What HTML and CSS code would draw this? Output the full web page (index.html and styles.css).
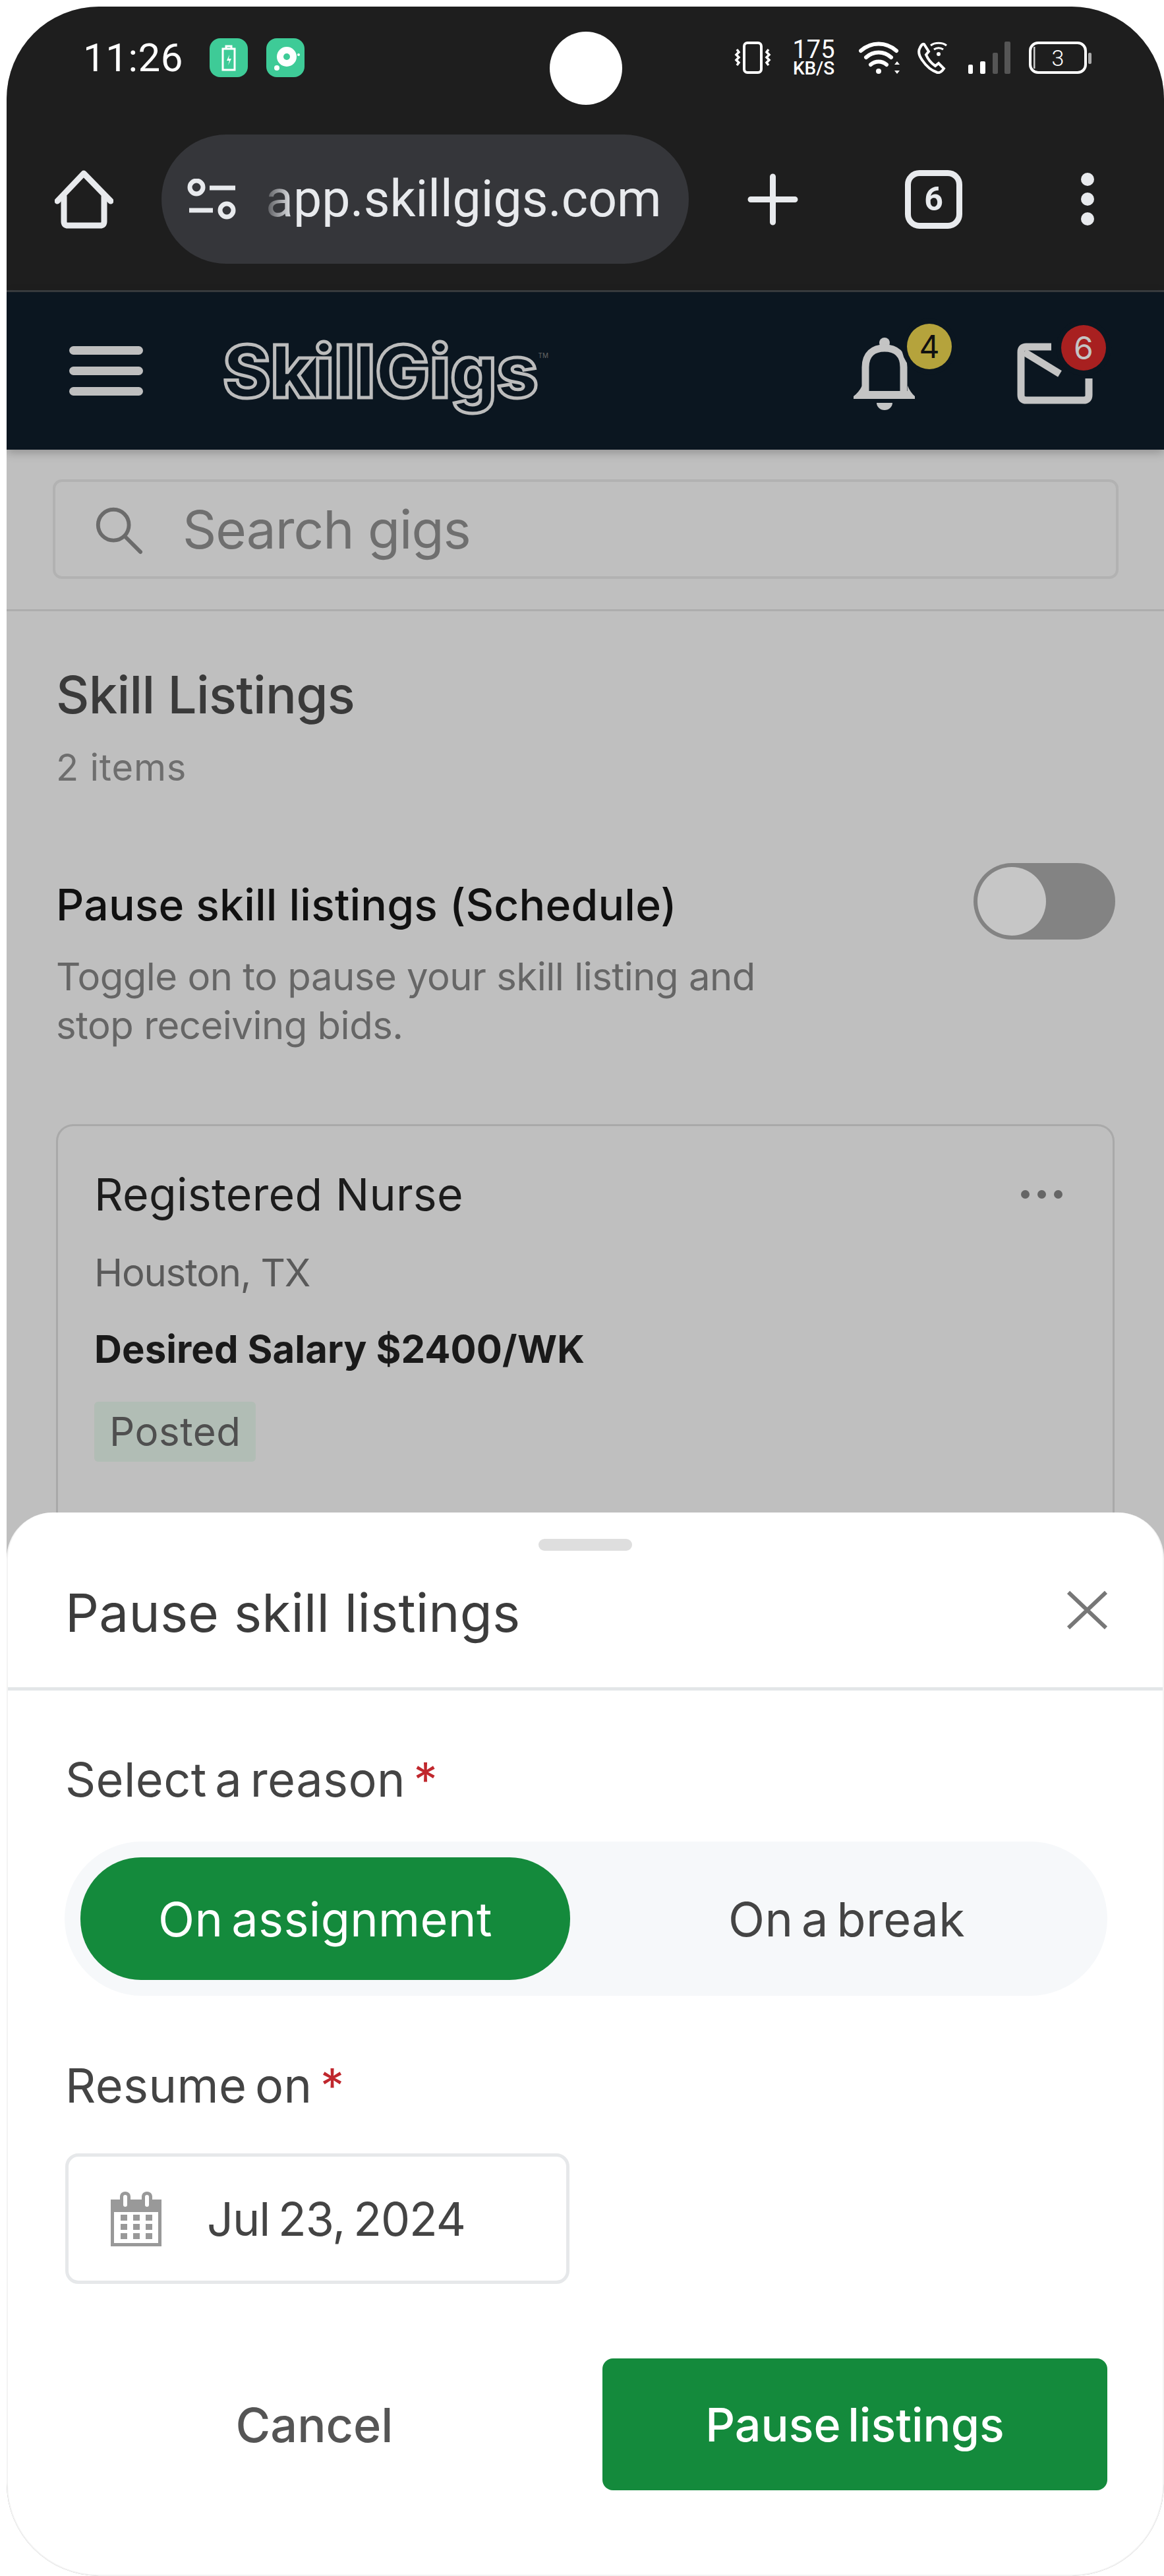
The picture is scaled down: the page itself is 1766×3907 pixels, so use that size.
FILE: index.html
```html
<!DOCTYPE html>
<html lang="en">
<head>
    <meta charset="UTF-8">
    <meta name="viewport" content="width=device-width, initial-scale=1.0">
    <title>SkillGigs - Pause skill listings</title>
    <link rel="stylesheet" href="styles.css">
</head>
<body>
<div class="phone">
    <div class="camera"></div>

    <!-- Status bar -->
    <div class="status">
        <div class="status-left">
            <span class="time">11:26</span>
            <span class="app-icon">
                <svg width="34" height="44" viewBox="0 0 34 44" fill="none" stroke="#fff" stroke-width="3">
                    <rect x="8" y="8" width="18" height="32"/>
                    <path d="M13 8V4h8v4"/>
                    <path d="M18 17l-4 9h4l-2 7 5-10h-4z" fill="#fff" stroke="none"/>
                </svg>
            </span>
            <span class="app-icon">
                <svg width="48" height="48" viewBox="0 0 48 48">
                    <circle cx="26" cy="22" r="15" fill="#fff"/>
                    <circle cx="26" cy="22" r="5" fill="#3ecb97"/>
                    <circle cx="11" cy="39" r="4" fill="#fff"/>
                    <circle cx="44" cy="19" r="2" fill="#fff"/>
                </svg>
            </span>
        </div>
        <div class="status-right">
            <svg width="56" height="49" viewBox="0 0 56 49" fill="none" stroke="#fff">
                <rect x="15" y="2" width="26" height="45" rx="5" stroke-width="4"/>
                <path d="M4 12l3 4-4 4 4 4-4 4 4 4-3 4M52 12l-3 4 4 4-4 4 4 4-4 4 3 4" stroke-width="3.5"/>
            </svg>
            <div class="net"><span class="net-val">175</span><span class="net-unit">KB/S</span></div>
            <svg class="wifi" width="66" height="49" viewBox="0 0 66 49" fill="none" stroke="#fff" stroke-width="6" stroke-linecap="round">
                <path d="M3 14C19 0 41 0 57 14"/>
                <path d="M11 24C22 14 38 14 49 24"/>
                <path d="M18 35C25 29 35 29 42 35"/>
                <circle cx="30" cy="45" r="4" fill="#fff" stroke="none"/>
                <path d="M58 30l-4 5h8zM58 49l-4-5h8z" fill="#fff" stroke="none"/>
            </svg>
            <svg width="49" height="49" viewBox="0 0 49 49" fill="none" stroke="#fff" stroke-width="4">
                <path d="M4 9C1 14 2 21 7 28C13 37 21 44 30 47C34 48 38 44 40 41L32 33L27 37C21 33 16 27 13 20L17 15L10 4C8 3 6 5 4 9Z"/>
                <path d="M20 6C26 1 38 1 44 6M25 12C29 9 35 9 39 12" stroke-width="3"/>
                <circle cx="32" cy="19" r="3" fill="#fff" stroke="none"/>
            </svg>
            <svg width="64" height="49" viewBox="0 0 64 49">
                <rect x="0" y="35" width="7" height="14" rx="2" fill="#fff"/>
                <rect x="18" y="30" width="8" height="19" rx="2" fill="#fff"/>
                <rect x="37" y="17" width="8" height="32" rx="2" fill="#555"/>
                <rect x="55" y="0" width="9" height="49" rx="2" fill="#555"/>
            </svg>
            <svg width="95" height="49" viewBox="0 0 95 49" fill="none">
                <rect x="2" y="2" width="84" height="45" rx="12" stroke="#fff" stroke-width="4"/>
                <rect x="7" y="8" width="2.5" height="33" fill="#ccc"/>
                <rect x="90" y="17" width="5" height="17" rx="2" fill="#aaa"/>
                <text class="batt-num" x="44" y="37" text-anchor="middle">3</text>
            </svg>
        </div>
    </div>

    <!-- Browser toolbar -->
    <div class="browser">
        <svg class="home" width="89" height="89" viewBox="0 0 89 89" fill="none" stroke="#e8eaed" stroke-width="9" stroke-linejoin="round" stroke-linecap="round">
            <path d="M4 47L44 5L85 47"/>
            <path d="M14 40V78Q14 84 20 84H69Q75 84 75 78V40"/>
        </svg>
        <div class="url-pill">
            <svg width="75" height="62" viewBox="0 0 75 62" fill="none" stroke="#e8eaed" stroke-width="7">
                <circle cx="14" cy="13" r="10"/>
                <path d="M34 14H73M3 48H39"/>
                <circle cx="60" cy="48" r="10"/>
            </svg>
            <span class="url"><span class="url-fade">a</span>pp.skillgigs.com</span>
        </div>
        <svg class="plus" width="77" height="79" viewBox="0 0 77 79" stroke="#e8eaed" stroke-width="9" stroke-linecap="round">
            <path d="M38.5 5V74M5 39.5H72"/>
        </svg>
        <div class="tabs">6</div>
        <div class="dots"><i></i><i></i><i></i></div>
    </div>

    <!-- App header -->
    <header class="topbar">
        <div class="burger"><i></i><i></i><i></i></div>
        <div class="logo">SkillGigs<span class="logo-tm">TM</span></div>
        <div class="top-icons">
            <div class="top-icon">
                <svg width="93" height="111" viewBox="0 0 93 111" fill="#c4c4c4">
                    <circle cx="47" cy="9" r="8"/>
                    <path d="M18 88V46C18 26 30 17 47 17C64 17 76 26 76 46V88" fill="none" stroke="#c4c4c4" stroke-width="11"/>
                    <path d="M0 90Q8 84 13 74V82H82V74Q86 84 93 90V94H0Z"/>
                    <path d="M35 100H59A12 11 0 0 1 35 100Z"/>
                </svg>
                <span class="badge badge-yellow">4</span>
            </div>
            <div class="top-icon">
                <svg width="115" height="93" viewBox="0 0 115 93" fill="none" stroke="#c4c4c4" stroke-width="11">
                    <path d="M52 6H14Q6 6 6 14V79Q6 87 14 87H101Q109 87 109 79V54"/>
                    <path d="M11 14L65 47"/>
                </svg>
                <span class="badge badge-red">6</span>
            </div>
        </div>
    </header>

    <main class="page">
        <div class="search-wrap">
            <div class="search">
                <svg width="76" height="78" viewBox="0 0 78 78" fill="none" stroke="#6b6b6b" stroke-width="6" stroke-linecap="round">
                    <circle cx="32" cy="32" r="24"/>
                    <path d="M50 50L74 74"/>
                </svg>
                <span class="search-text">Search gigs</span>
            </div>
        </div>

        <section class="listings">
            <h1 class="page-title">Skill Listings</h1>
            <p class="count">2 items</p>

            <div class="pause-row">
                <div class="pause-copy">
                    <h2 class="pause-title">Pause skill listings (Schedule)</h2>
                    <p class="pause-desc">Toggle on to pause your skill listing and<br>stop receiving bids.</p>
                </div>
                <div class="toggle"><i></i></div>
            </div>

            <div class="card">
                <div class="card-head">
                    <h3 class="card-title">Registered Nurse</h3>
                    <div class="more"><i></i><i></i><i></i></div>
                </div>
                <p class="card-loc">Houston, TX</p>
                <p class="card-salary">Desired Salary $2400/WK</p>
                <span class="chip">Posted</span>
            </div>
        </section>
    </main>

    <!-- Bottom sheet -->
    <div class="sheet">
        <div class="handle"></div>
        <div class="sheet-head">
            <h2 class="sheet-title">Pause skill listings</h2>
            <svg class="sheet-close" width="63" height="58" viewBox="0 0 63 58" stroke="#777" stroke-width="6">
                <path d="M3 2L60 56M60 2L3 56"/>
            </svg>
        </div>
        <div class="sheet-body">
            <label class="field-label">Select a reason <span class="req">*</span></label>
            <div class="segment">
                <div class="seg-item seg-active">On assignment</div>
                <div class="seg-item">On a break</div>
            </div>

            <label class="field-label resume-label">Resume on <span class="req">*</span></label>
            <div class="date-input">
                <svg width="77" height="83" viewBox="0 0 77 83" fill="#999">
                    <path d="M0 12H14V7A8 7 0 0 1 30 7V12H47V7A8 7 0 0 1 63 7V12H77V83H0ZM5 31V78H72V31Z" fill-rule="evenodd"/>
                    <rect x="19" y="5" width="6" height="18" rx="3" fill="#fff"/>
                    <rect x="52" y="5" width="6" height="18" rx="3" fill="#fff"/>
                    <rect x="15" y="35" width="10" height="9"/><rect x="34" y="35" width="10" height="9"/><rect x="53" y="35" width="10" height="9"/>
                    <rect x="15" y="49" width="10" height="9"/><rect x="34" y="49" width="10" height="9"/><rect x="53" y="49" width="10" height="9"/>
                    <rect x="15" y="63" width="10" height="9"/><rect x="34" y="63" width="10" height="9"/><rect x="53" y="63" width="10" height="9"/>
                </svg>
                <span class="date-text">Jul 23, 2024</span>
            </div>

            <div class="actions">
                <div class="btn-cancel">Cancel</div>
                <div class="btn-primary">Pause listings</div>
            </div>
        </div>
    </div>
</div>
</body>
</html>
```

FILE: styles.css
```css
/* General */
* {
    box-sizing: border-box;
}
body {
    margin: 0;
    background: #fff;
    font-family: Inter, "Noto Sans", sans-serif;
}
h1, h2, h3, p {
    margin: 0;
    font-weight: 400;
}
.phone {
    position: relative;
    width: 1756px;
    height: 3897px;
    margin: 10px 0 0 10px;
    border-radius: 140px;
    overflow: hidden;
    background: #bfbfbf;
}
.camera {
    position: absolute;
    left: 824px;
    top: 38px;
    width: 110px;
    height: 111px;
    border-radius: 50%;
    background: #fff;
}

/* Status bar */
.status {
    height: 194px;
    padding: 48px 110px 0 116px;
    display: flex;
    justify-content: space-between;
    align-items: flex-start;
    background: #1e1e1e;
}
.status-left {
    display: flex;
    align-items: center;
    height: 59px;
}
.time {
    width: 192px;
    font-family: Roboto, sans-serif;
    font-size: 60px;
    letter-spacing: 0.5px;
    color: #fff;
}
.app-icon {
    width: 58px;
    height: 59px;
    margin-right: 28px;
    border-radius: 16px;
    background: #3ecb97;
    display: flex;
    align-items: center;
    justify-content: center;
}
.status-right {
    display: flex;
    align-items: center;
    gap: 28px;
    height: 59px;
}
.net {
    display: flex;
    flex-direction: column;
    align-items: center;
    width: 65px;
    margin: 0 8px 0 4px;
    font-family: Roboto, sans-serif;
    color: #fff;
}
.net-val {
    font-size: 38px;
    line-height: 32px;
}
.net-unit {
    font-size: 28px;
    font-weight: 500;
    line-height: 26px;
}
.wifi {
    margin-right: -5px;
}
.batt-num {
    font-family: Roboto, sans-serif;
    font-size: 34px;
    font-weight: 300;
    fill: #fff;
}

/* Browser toolbar */
.browser {
    height: 239px;
    padding: 0 0 40px 73px;
    display: flex;
    align-items: center;
    background: #1e1e1e;
    border-bottom: 3px solid #3b3e41;
}
.url-pill {
    width: 800px;
    height: 196px;
    margin-left: 73px;
    padding-left: 39px;
    border-radius: 98px;
    background: #35363a;
    display: flex;
    align-items: center;
    gap: 44px;
}
.url {
    font-family: Roboto, sans-serif;
    font-size: 77px;
    color: #e8eaed;
}
.url-fade {
    background: linear-gradient(90deg, #55565a, #e8eaed);
    -webkit-background-clip: text;
    background-clip: text;
    color: transparent;
}
.plus {
    margin-left: 89px;
}
.tabs {
    width: 87px;
    height: 89px;
    margin-left: 162px;
    border: 9px solid #e8eaed;
    border-radius: 22px;
    display: flex;
    align-items: center;
    justify-content: center;
    font-family: Roboto, sans-serif;
    font-size: 50px;
    font-weight: 700;
    color: #e8eaed;
}
.dots {
    margin-left: 180px;
    display: flex;
    flex-direction: column;
    gap: 10px;
}
.dots i {
    width: 20px;
    height: 20px;
    border-radius: 50%;
    background: #e8eaed;
}

/* App header */
.topbar {
    position: relative;
    height: 239px;
    padding: 0 108px 0 95px;
    display: flex;
    align-items: center;
    background: #0b1620;
    box-shadow: 0 4px 14px rgba(0, 0, 0, 0.25);
}
.burger {
    display: flex;
    flex-direction: column;
    gap: 18px;
}
.burger i {
    width: 112px;
    height: 13px;
    border-radius: 7px;
    background: #bfbfbf;
}
.logo {
    position: relative;
    margin-left: 121px;
    font-size: 110px;
    font-weight: 800;
    line-height: 120px;
    letter-spacing: 0;
    color: #0b1620;
    -webkit-text-stroke: 5px #bcbcbc;
}
.logo-tm {
    position: absolute;
    left: 100%;
    top: 30px;
    font-size: 10px;
    font-weight: 400;
    line-height: 12px;
    letter-spacing: 0;
    color: #666;
    -webkit-text-stroke: 0;
}
.top-icons {
    margin-left: auto;
    margin-top: 8px;
    display: flex;
    align-items: center;
    gap: 155px;
}
.top-icon {
    position: relative;
    display: flex;
}
.badge {
    position: absolute;
    width: 68px;
    height: 69px;
    border-radius: 50%;
    box-shadow: 0 0 0 8px #0b1620;
    display: flex;
    align-items: center;
    justify-content: center;
    font-size: 48px;
}
.top-icon:first-child .badge {
    left: 81px;
    top: -20px;
}
.top-icon:last-child .badge {
    left: 67px;
    top: -27px;
}
.badge-yellow {
    background: #b5a33c;
    color: #111;
}
.badge-red {
    background: #a82020;
    color: #c4c4c4;
}

/* Page behind the sheet */
.page {
    color: #3a3a3a;
}
.search-wrap {
    padding: 45px 69px 46px 70px;
    border-bottom: 3px solid #adadad;
}
.search {
    height: 151px;
    padding-left: 57px;
    border: 4px solid #b2b2b2;
    border-radius: 14px;
    display: flex;
    align-items: center;
    gap: 60px;
}
.search-text {
    font-size: 80px;
    letter-spacing: -1px;
    color: #6f6f6f;
}
.listings {
    padding: 0 74px 0 75px;
}
.page-title {
    margin-top: 77px;
    font-size: 78px;
    line-height: 100px;
    font-weight: 500;
    letter-spacing: -0.7px;
    color: #3a3a3a;
}
.count {
    margin-top: 25px;
    font-size: 56px;
    line-height: 70px;
    letter-spacing: 0.8px;
    color: #6e6e6e;
}
.pause-row {
    margin-top: 100px;
    display: flex;
    justify-content: space-between;
    align-items: flex-start;
}
.pause-title {
    margin-top: 33px;
    font-size: 66px;
    line-height: 80px;
    font-weight: 500;
    letter-spacing: 0.2px;
    color: #111;
}
.pause-desc {
    margin-top: 32px;
    font-size: 58px;
    line-height: 74px;
    letter-spacing: -0.5px;
    color: #666;
}
.toggle {
    width: 215px;
    height: 116px;
    margin-top: 10px;
    padding: 6px;
    border-radius: 58px;
    background: #838383;
}
.toggle i {
    display: block;
    width: 104px;
    height: 104px;
    border-radius: 50%;
    background: #c6c6c6;
}
.card {
    height: 700px;
    margin: 113px 1px 0 0;
    padding: 0 76px 0 55px;
    border: 3px solid #a9a9a9;
    border-radius: 26px;
}
.card-head {
    margin-top: 63px;
    display: flex;
    justify-content: space-between;
    align-items: center;
}
.card-title {
    font-size: 68px;
    line-height: 80px;
    letter-spacing: 0.3px;
    color: #1c1c1c;
}
.more {
    display: flex;
    gap: 12px;
}
.more i {
    width: 13px;
    height: 13px;
    border-radius: 50%;
    background: #666;
}
.card-loc {
    margin-top: 44px;
    font-size: 58px;
    line-height: 70px;
    letter-spacing: -1.2px;
    color: #5a5a5a;
}
.card-salary {
    margin-top: 46px;
    font-size: 58px;
    line-height: 70px;
    font-weight: 700;
    letter-spacing: 0.1px;
    color: #1a1a1a;
}
.chip {
    display: inline-block;
    height: 91px;
    margin-top: 45px;
    padding: 0 23px;
    border-radius: 6px;
    background: #b1bdb5;
    font-size: 60px;
    line-height: 91px;
    letter-spacing: 0.5px;
    color: #4f4f4f;
}

/* Bottom sheet */
.sheet {
    position: absolute;
    left: 0;
    right: 0;
    bottom: 0;
    height: 1613px;
    padding-top: 40px;
    background: #fff;
    border: 2px solid #f3f3f3;
    border-top: 0;
    border-radius: 70px 70px 140px 140px;
}
.handle {
    width: 142px;
    height: 18px;
    margin: 0 auto;
    border-radius: 9px;
    background: #dedede;
}
.sheet-head {
    height: 212px;
    padding: 0 83px 20px 87px;
    display: flex;
    justify-content: space-between;
    align-items: center;
    border-bottom: 5px solid #e3e6e8;
}
.sheet-title {
    font-size: 80px;
    font-weight: 400;
    letter-spacing: 0.2px;
    color: #3c3c3c;
}
.sheet-close {
    margin-top: -8px;
}
.sheet-body {
    padding: 90px 84px 0 87px;
    font-size: 72px;
    letter-spacing: 0.4px;
    word-spacing: -8px;
    color: #444;
}
.field-label {
    display: block;
    line-height: 90px;
}
.req {
    color: #c0272d;
}
.resume-label {
    margin-top: 91px;
}
.segment {
    height: 234px;
    margin: 49px 0 0 -1px;
    padding: 24px;
    border-radius: 117px;
    background: #f6f8fa;
    display: flex;
}
.seg-item {
    flex: 1;
    padding-left: 48px;
    display: flex;
    align-items: center;
    justify-content: center;
}
.seg-active {
    flex: 0 0 743px;
    padding-left: 0;
    border-radius: 92px;
    background: #148a3c;
    color: #fff;
}
.date-input {
    width: 765px;
    height: 198px;
    margin: 58px 0 0 0;
    padding-left: 64px;
    border: 5px solid #e6e8ea;
    border-radius: 20px;
    display: flex;
    align-items: center;
    gap: 69px;
}
.date-text {
    font-size: 70px;
    letter-spacing: -1px;
    word-spacing: -6px;
}
.actions {
    margin-top: 113px;
    display: flex;
    justify-content: space-between;
    align-items: center;
}
.btn-cancel {
    width: 756px;
    text-align: center;
    font-weight: 500;
    letter-spacing: 0;
    color: #555;
}
.btn-primary {
    width: 766px;
    height: 200px;
    border-radius: 16px;
    background: #148a3c;
    display: flex;
    align-items: center;
    justify-content: center;
    font-size: 70px;
    font-weight: 500;
    letter-spacing: 0;
    color: #fff;
}
```
